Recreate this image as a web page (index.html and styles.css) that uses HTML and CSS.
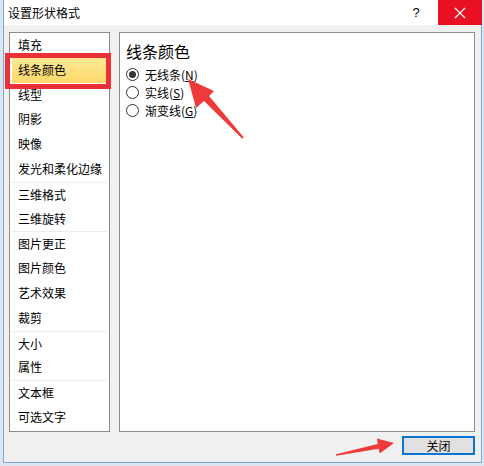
FILE: index.html
```html
<!DOCTYPE html>
<html lang="zh">
<head>
<meta charset="utf-8">
<link rel="stylesheet" href="styles.css">
</head>
<body>
<div class="window">
  <div class="titlebar">
    <span class="title">设置形状格式</span>
    <span class="help">?</span>
    <span class="close-x"><svg width="12" height="12" viewBox="0 0 12 12"><path d="M1 1L11 11M11 1L1 11" stroke="#fff" stroke-width="1.3"/></svg></span>
  </div>
  <div class="content">
    <div class="panels">
      <ul class="nav">
        <li>填充</li>
        <li class="active">线条颜色</li>
        <li>线型</li>
        <li>阴影</li>
        <li>映像</li>
        <li>发光和柔化边缘</li>
        <li class="sep">三维格式</li>
        <li>三维旋转</li>
        <li class="sep">图片更正</li>
        <li>图片颜色</li>
        <li>艺术效果</li>
        <li>裁剪</li>
        <li class="sep">大小</li>
        <li>属性</li>
        <li class="sep">文本框</li>
        <li>可选文字</li>
      </ul>
      <div class="detail">
        <h2 class="heading">线条颜色</h2>
        <div class="radios">
          <label class="radio"><span class="dot checked"></span>无线条(<u>N</u>)</label>
          <label class="radio"><span class="dot"></span>实线(<u>S</u>)</label>
          <label class="radio"><span class="dot"></span>渐变线(<u>G</u>)</label>
        </div>
      </div>
    </div>
    <div class="buttons">
      <button class="btn">关闭</button>
    </div>
  </div>
</div>
<div class="redbox"></div>
<svg class="arrows" width="484" height="466" viewBox="0 0 484 466">
  <polygon fill="#ee3a3a" points="188,79 214,91 209,96 243.7,137.3 242.3,138.7 204,101 196,108"/>
  <polygon fill="#ee3a3a" points="394,443 379.7,453.6 378.8,448.7 336.1,455.8 335.9,454.3 377.8,443.9 376.9,438.6"/>
</svg>
</body>
</html>
```

FILE: styles.css
```css
* { box-sizing: border-box; }
html, body { margin: 0; padding: 0; }
body {
  width: 484px;
  height: 466px;
  background: #dde6ee;
  font-family: "Noto Sans CJK SC", "Noto Sans", sans-serif;
  font-size: 12px;
  color: #000;
  position: relative;
  overflow: hidden;
}
.window {
  margin-left: 3px;
  width: 479px;
  height: 463px;
  border: 1px solid #7aa7d8;
  border-top: none;
  background: #f0f0f0;
  display: flex;
  flex-direction: column;
}
.titlebar {
  height: 25px;
  background: #fff;
  display: flex;
  align-items: center;
}
.title {
  padding-left: 4px;
  flex: 1;
  font-size: 12px;
  line-height: 25px;
}
.help {
  font-family: "Liberation Sans", sans-serif;
  font-size: 13px;
  width: 20px;
  margin-right: 12px;
  text-align: center;
}
.close-x {
  width: 44px;
  height: 25px;
  background: #e81123;
  display: flex;
  align-items: center;
  justify-content: center;
  margin-right: -1px;
}
.content {
  flex: 1;
  padding: 7px 5px 0 5px;
  display: flex;
  flex-direction: column;
}
.panels {
  display: flex;
  gap: 9px;
  height: 400px;
}
.nav {
  list-style: none;
  margin: 0;
  padding: 0 2px;
  width: 101px;
  background: #fff;
  border: 1px solid #8c8c8c;
}
.nav li {
  height: 24.8px;
  line-height: 24px;
  padding-left: 6px;
  white-space: nowrap;
}
.nav li.sep {
  border-top: 1px solid #ececec;
}
.nav li.active {
  background: linear-gradient(#fde896, #fcd86a);
}
.detail {
  width: 356px;
  background: #fff;
  border: 1px solid #8c8c8c;
  padding: 6px 0 0 6px;
}
.heading {
  margin: 0;
  font-weight: normal;
  font-size: 16px;
  line-height: 24px;
}
.radios {
  display: flex;
  flex-direction: column;
  margin-top: 2px;
}
.radio {
  display: flex;
  align-items: center;
  height: 18px;
  font-size: 12px;
}
.radio u { text-underline-offset: 1px; }
.dot {
  width: 13px;
  height: 13px;
  border: 1px solid #333;
  border-radius: 50%;
  background: #fff;
  margin-right: 6px;
  display: inline-flex;
  align-items: center;
  justify-content: center;
}
.dot.checked::after {
  content: "";
  width: 7px;
  height: 7px;
  border-radius: 50%;
  background: #333;
}
.buttons {
  display: flex;
  justify-content: flex-end;
  padding-top: 4px;
  padding-right: 1px;
}
.btn {
  width: 73px;
  height: 19px;
  border: 2px solid #0a74d2;
  background: #e1e1e1;
  font-family: "Noto Sans CJK SC", sans-serif;
  font-size: 12px;
  line-height: 13px;
  padding: 0;
  color: #000;
}
.redbox {
  position: absolute;
  left: 5px;
  top: 53px;
  width: 106px;
  height: 36px;
  border: 5px solid #ec3038;
}
.arrows {
  position: absolute;
  left: 0;
  top: 0;
  pointer-events: none;
}
```
